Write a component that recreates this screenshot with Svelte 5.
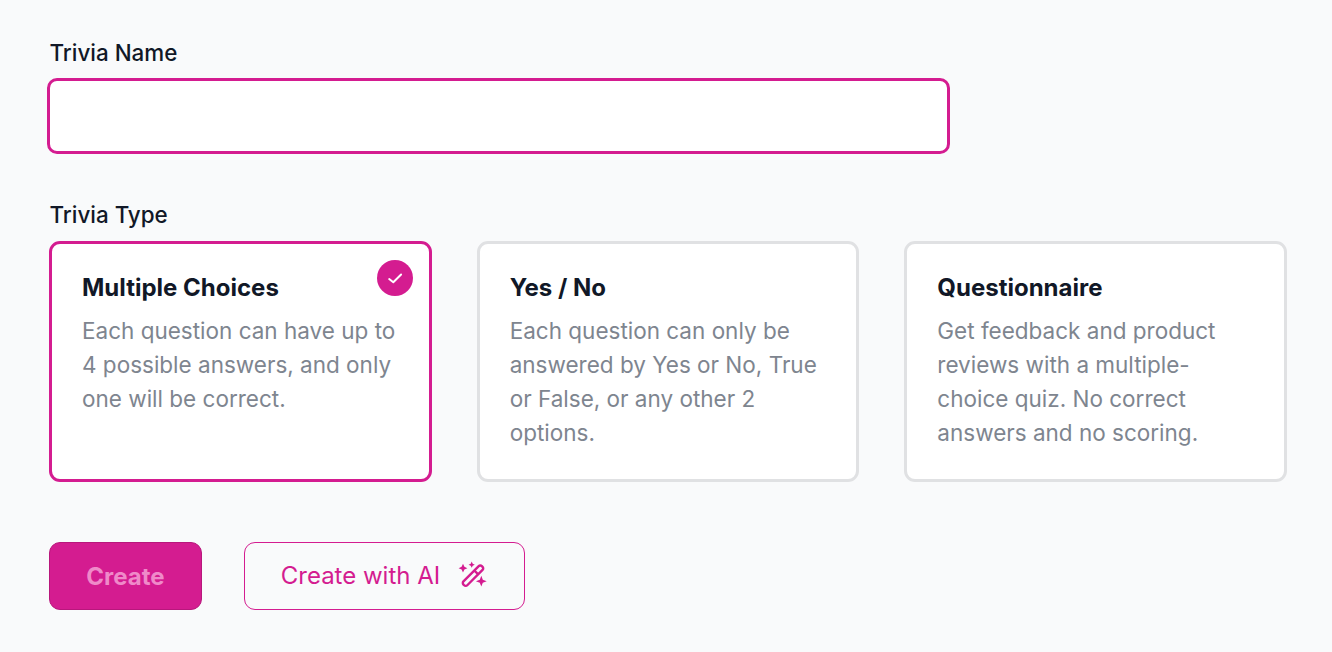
<script>
  const types = [
    { title: 'Multiple Choices', desc: 'Each question can have up to 4 possible answers, and only one will be correct.', selected: true },
    { title: 'Yes / No', desc: 'Each question can only be answered by Yes or No, True or False, or any other 2 options.', selected: false },
    { title: 'Questionnaire', desc: 'Get feedback and product reviews with a multiple-choice quiz. No correct answers and no scoring.', selected: false }
  ];
</script>

<main class="page">
  <label class="label" for="name">Trivia Name</label>
  <input id="name" class="input" type="text" />

  <div class="label type-label">Trivia Type</div>
  <div class="cards">
    {#each types as t}
      <div class="card" class:selected={t.selected}>
        {#if t.selected}
          <span class="check">
            <svg width="18" height="18" viewBox="0 0 18 18" fill="none" stroke="#fff" stroke-width="2" stroke-linecap="round" stroke-linejoin="round"><path d="M3.200 10l4.100 3.200 7.800-7.700"/></svg>
          </span>
        {/if}
        <h3 class="title">{t.title}</h3>
        <p class="desc">{t.desc}</p>
      </div>
    {/each}
  </div>

  <div class="actions">
    <button class="btn primary">Create</button>
    <button class="btn outline">
      <span class="ai-text">Create with AI</span>
      <svg width="30" height="30" viewBox="0 0 30 30" fill="none" stroke="#d41c90" stroke-width="2.400" stroke-linejoin="round">
        <rect x="-2.700" y="-13" width="5.400" height="26" rx="2.200" transform="translate(15 14.700) rotate(45)"/>
        <path d="M16.300 9.500l4.200 4.200"/>
        <path fill="#d41c90" stroke="none" d="M5 2.800l1.400 3 3 1.400-3 1.400-1.400 3-1.400-3-3-1.400 3-1.400zM13.700.6l1 2.100 2.100 1-2.100 1-1 2.100-1-2.100-2.100-1 2.100-1zM23.300 14.800l1.500 3.900 3.900 1.500-3.900 1.500-1.500 3.900-1.500-3.900-3.900-1.500 3.900-1.500z"/>
      </svg>
    </button>
  </div>
</main>

<style>
  :global(body) { margin: 0; background: #f9fafb; }
  .page {
    box-sizing: border-box;
    height: 652px;
    padding: 39px 45px 0 49px;
    font-family: Inter, "Liberation Sans", sans-serif;
  }
  .label {
    display: block;
    margin-left: 0.500px;
    font-size: 22.400px;
    line-height: 28px;
    font-weight: 500;
    color: #111827;
  }
  .input {
    display: block;
    box-sizing: border-box;
    width: 903px;
    height: 76px;
    margin: 11px 0 0 -2px;
    background: #fff;
    border: 3px solid #d41c90;
    border-radius: 10px;
    outline: none;
  }
  .type-label { margin-top: 47px; }
  .cards {
    display: grid;
    grid-template-columns: repeat(3, 1fr);
    column-gap: 45px;
    margin-top: 12px;
  }
  .card {
    position: relative;
    box-sizing: border-box;
    height: 241px;
    padding: 29.500px 30px 0 30px;
    background: #fff;
    border: 3px solid #e0e1e3;
    border-radius: 11px;
  }
  .card.selected { border-color: #d41c90; }
  .check {
    position: absolute;
    top: 16px;
    right: 16px;
    width: 36px;
    height: 36px;
    display: flex;
    align-items: center;
    justify-content: center;
    border-radius: 50%;
    background: #d41c90;
  }
  .title {
    margin: 0;
    font-size: 24px;
    line-height: 28px;
    font-weight: 700;
    color: #111827;
  }
  .desc {
    margin: 12.500px 0 0;
    font-size: 22.500px;
    line-height: 34px;
    font-weight: 400;
    color: #7e858f;
  }
  .actions {
    display: flex;
    gap: 42px;
    margin-top: 60px;
  }
  .btn {
    box-sizing: border-box;
    height: 68px;
    border-radius: 11px;
    font-family: inherit;
    display: inline-flex;
    align-items: center;
    justify-content: center;
    background: none;
    padding: 0;
  }
  .primary {
    width: 153px;
    background: #d41c90;
    border: 1px solid #b8177c;
    color: #ef8ac9;
    font-size: 24px;
    font-weight: 700;
  }
  .outline {
    width: 281px;
    gap: 18px;
    border: 1px solid #d41c90;
    color: #d41c90;
    font-size: 24px;
    font-weight: 400;
  }
  .ai-text { margin-top: -1px; }
</style>
